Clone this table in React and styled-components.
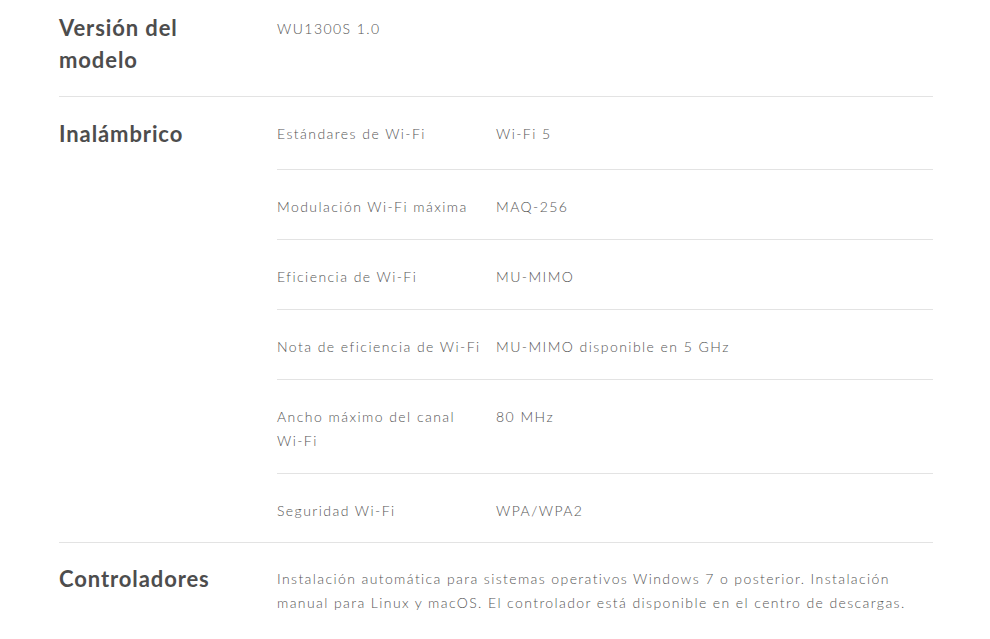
import styled, { createGlobalStyle } from "styled-components";

const GlobalStyle = createGlobalStyle`
  body {
    margin: 0;
    background: #ffffff;
    font-family: "Lato", "Noto Sans", sans-serif;
  }
`;

const Page = styled.div`
  width: 874px;
  margin-left: 59px;
`;

const Section = styled.section`
  display: grid;
  grid-template-columns: 218px 1fr;
  border-bottom: ${(props) => (props.last ? "none" : "1px solid #e3e3e3")};
  padding: ${(props) => props.pad || "0"};
`;

const Heading = styled.h2`
  margin: 0;
  padding-top: ${(props) => props.top || "0"};
  font-size: 22px;
  line-height: 32px;
  font-weight: 700;
  color: #4d4d4d;
  letter-spacing: 0.9px;
`;

const Text = styled.div`
  font-size: 14px;
  line-height: 24px;
  font-weight: 300;
  color: #555555;
  letter-spacing: ${(props) => props.spacing || "1.45px"};
  padding-top: ${(props) => props.top || "0"};
  max-width: ${(props) => props.max || "none"};
`;

const NoWrap = styled.span`
  white-space: nowrap;
`;

const SpecList = styled.div`
  display: flex;
  flex-direction: column;
`;

const SpecRow = styled.div`
  display: grid;
  grid-template-columns: 219px 1fr;
  padding: 25px 0 ${(props) => props.bottom || "20px"};
  border-bottom: ${(props) => (props.last ? "none" : "1px solid #e3e3e3")};
`;

const specs = [
  ["Estándares de Wi-Fi", "Wi-Fi 5"],
  ["Modulación Wi-Fi máxima", "MAQ-256"],
  ["Eficiencia de Wi-Fi", "MU-MIMO"],
  ["Nota de eficiencia de Wi-Fi", "MU-MIMO disponible en 5 GHz"],
  ["Ancho máximo del canal Wi-Fi", "80 MHz"],
  ["Seguridad Wi-Fi", "WPA/WPA2"],
];

// keep "Wi-Fi" together when a label wraps
const label = (text) =>
  text.split(/(Wi-Fi)/).map((part, i) =>
    part === "Wi-Fi" ? <NoWrap key={i}>{part}</NoWrap> : part
  );

export default function App() {
  return (
    <>
      <GlobalStyle />
      <Page>
        <Section pad="12px 0 20px">
          <Heading>
            Versión del
            <br />
            modelo
          </Heading>
          <Text top="5px">WU1300S 1.0</Text>
        </Section>
        <Section>
          <Heading top="21px">Inalámbrico</Heading>
          <SpecList>
            {specs.map(([name, value], i) => (
              <SpecRow
                key={name}
                bottom={i === 0 ? "23px" : i === specs.length - 1 ? "19px" : "20px"}
                last={i === specs.length - 1}
              >
                <Text>{label(name)}</Text>
                <Text>{value}</Text>
              </SpecRow>
            ))}
          </SpecList>
        </Section>
        <Section pad="20px 0 0" last>
          <Heading>Controladores</Heading>
          <Text spacing="1.4px" top="4px" max="650px">
            Instalación automática para sistemas operativos Windows 7 o
            posterior. Instalación manual para Linux y macOS. El controlador
            está disponible en el centro de descargas.
          </Text>
        </Section>
      </Page>
    </>
  );
}
